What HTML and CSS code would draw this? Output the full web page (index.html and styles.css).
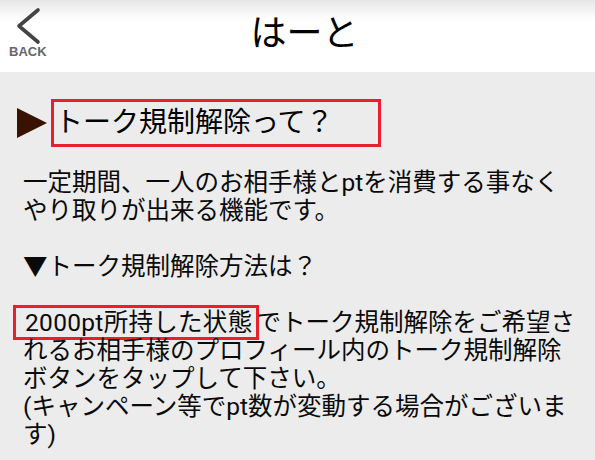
FILE: index.html
```html
<!DOCTYPE html>
<html lang="ja">
<head>
<meta charset="utf-8">
<link rel="stylesheet" href="styles.css">
</head>
<body>
<header class="header">
  <a class="back">
    <svg class="back-icon" width="30" height="40" viewBox="0 0 30 40">
      <polyline points="26,4 7,20 26,36" fill="none" stroke="#444" stroke-width="3.6" stroke-linecap="round" stroke-linejoin="round"/>
    </svg>
    <span class="back-label">BACK</span>
  </a>
  <h1 class="title">はーと</h1>
  <div class="spacer"></div>
</header>
<main class="content">
  <div class="heading">
    <svg class="arrow" width="30" height="30" viewBox="0 0 30 30"><polygon points="0,0 30,15 0,30" fill="#3a1200"/></svg>
    <h2 class="heading-box">トーク規制解除って？</h2>
  </div>
  <p class="text">一定期間、一人のお相手様とptを消費する事なくやり取りが出来る機能です。<br><br>▼トーク規制解除方法は？<br><br><span class="mark">2000pt所持した状態</span>でトーク規制解除をご希望されるお相手様のプロフィール内のトーク規制解除ボタンをタップして下さい。<br>(キャンペーン等でpt数が変動する場合がございます)</p>
</main>
</body>
</html>
```
FILE: styles.css
```css
html, body {
  margin: 0;
  padding: 0;
}
body {
  background: #ececec;
  font-family: Roboto, "Noto Sans CJK JP", sans-serif;
  color: #0a0a0a;
  width: 595px;
  height: 460px;
  overflow: hidden;
}
.header {
  height: 72px;
  background: linear-gradient(to bottom, #e6e6e6 0px, #fbfbfb 16px, #ffffff 24px);
  display: grid;
  grid-template-columns: 60px 1fr 60px;
  align-items: start;
}
.back {
  display: flex;
  flex-direction: column;
  align-items: flex-start;
  padding-top: 6px;
  padding-left: 9px;
}
.back-icon {
  display: block;
  margin-left: 3px;
}
.back-label {
  font-family: "Liberation Sans", Arial, sans-serif;
  font-size: 13px;
  font-weight: bold;
  color: #666;
  line-height: 12px;
  margin-top: 0;
}
.title {
  margin: 0;
  text-align: center;
  font-weight: normal;
  font-size: 36px;
  line-height: 68px;
  color: #000;
  padding-left: 14px;
}
.content {
  padding: 27px 17px 0 23px;
}
.heading {
  display: flex;
  align-items: center;
  gap: 4px;
  margin-left: -6px;
}
.arrow {
  display: block;
}
.heading-box {
  margin: 0;
  border: 3px solid #e8202a;
  font-weight: normal;
  font-size: 28px;
  line-height: 42px;
  padding: 0 44px 0 1px;
  color: #000;
}
.text {
  margin: 22px 0 0 0;
  font-size: 24.5px;
  line-height: 28px;
}
.mark {
  border: 3px solid #e8202a;
  margin-left: -10px;
  margin-right: -3px;
  padding: 0 4px 0 9px;
  letter-spacing: 0.3px;
}
```
